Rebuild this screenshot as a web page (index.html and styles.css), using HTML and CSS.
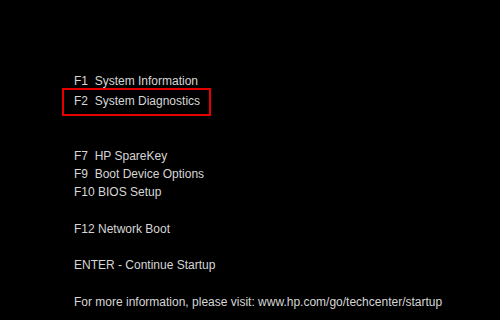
FILE: index.html
```html
<!DOCTYPE html>
<html lang="en">
<head>
    <meta charset="UTF-8">
    <title>Startup Menu</title>
    <link rel="stylesheet" href="styles.css">
</head>
<body>
    <div class="menu">
        <div class="line">F1  System Information</div>
        <div class="line selected">F2  System Diagnostics</div>
        <div class="gap wide"></div>
        <div class="line">F7  HP SpareKey</div>
        <div class="line">F9  Boot Device Options</div>
        <div class="line">F10 BIOS Setup</div>
        <div class="gap"></div>
        <div class="line">F12 Network Boot</div>
        <div class="gap"></div>
        <div class="line">ENTER - Continue Startup</div>
        <div class="gap"></div>
        <div class="line">For more information, please visit: www.hp.com/go/techcenter/startup</div>
    </div>
</body>
</html>
```

FILE: styles.css
```css
html, body {
    margin: 0;
    padding: 0;
    background-color: #000;
    height: 100%;
}

body {
    font-family: 'Liberation Sans', Arial, sans-serif;
    font-size: 12px;
    color: #d6d6d6;
}

.menu {
    padding: 72px 0 0 74px;
}

.line {
    white-space: pre;
    height: 18.3px;
    line-height: 18.3px;
}

.gap {
    height: 18.3px;
}

.gap.wide {
    height: 31px;
}

/* highlighted entry */
.selected {
    width: 135px;
    margin: -2px 0 0 -12px;
    padding: 2px 0 3px 10px;
    border: 2px solid #e80000;
}
```
